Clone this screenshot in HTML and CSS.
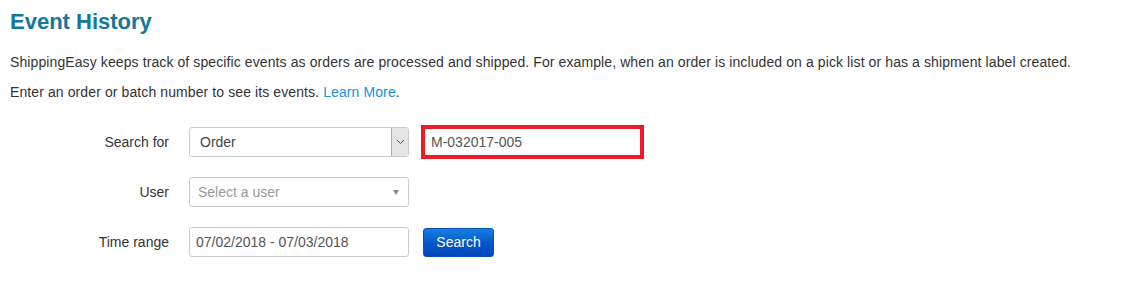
FILE: index.html
```html
<!DOCTYPE html>
<html>
<head>
<meta charset="utf-8">
<link rel="stylesheet" href="styles.css">
</head>
<body>
<div class="page">
  <h1 class="title">Event History</h1>
  <p class="intro">ShippingEasy keeps track of specific events as orders are processed and shipped. For example, when an order is included on a pick list or has a shipment label created.</p>
  <p class="intro second">Enter an order or batch number to see its events. <a class="link" href="#">Learn More</a>.</p>

  <div class="form">
    <div class="row">
      <div class="label">Search for</div>
      <div class="control select native">
        <span class="value">Order</span>
        <span class="dropbtn">
          <svg width="9" height="6" viewBox="0 0 9 6"><path d="M1 1 L4.5 4.5 L8 1" fill="none" stroke="#555" stroke-width="1"/></svg>
        </span>
      </div>
      <div class="control text highlight"><span class="value">M-032017-005</span></div>
    </div>
    <div class="row">
      <div class="label">User</div>
      <div class="control select chosen">
        <span class="placeholder">Select a user</span>
        <span class="caret"></span>
      </div>
    </div>
    <div class="row">
      <div class="label">Time range</div>
      <div class="control text"><span class="value">07/02/2018 - 07/03/2018</span></div>
      <button class="btn">Search</button>
    </div>
  </div>
</div>
</body>
</html>
```
FILE: styles.css
```css
html, body {
  margin: 0;
  padding: 0;
  background: #fff;
}
body {
  font-family: "Liberation Sans", Arial, sans-serif;
  font-size: 14px;
  color: #333;
}
.page {
  padding: 9px 10px 0 10px;
}
.title {
  margin: 0;
  font-size: 22px;
  line-height: 26px;
  font-weight: bold;
  color: #13789b;
}
.intro {
  margin: 17px 0 0 0;
  line-height: 20px;
  letter-spacing: 0.1px;
}
.intro.second {
  margin-top: 10px;
}
.link {
  color: #1a8fd9;
  text-decoration: none;
}
.form {
  margin-top: 25px;
  display: flex;
  flex-direction: column;
  gap: 20px;
}
.row {
  display: flex;
  align-items: center;
  height: 30px;
}
.label {
  width: 159px;
  text-align: right;
  margin-right: 20px;
  color: #333;
}
.control {
  box-sizing: border-box;
  width: 220px;
  height: 30px;
  border: 1px solid #ccc;
  border-radius: 3px;
  background: #fff;
  display: flex;
  align-items: center;
  position: relative;
}
.select.native .value {
  padding-left: 10px;
  color: #444;
  flex: 1;
}
.dropbtn {
  box-sizing: border-box;
  width: 17px;
  height: 28px;
  background: #e4e4e4;
  border-left: 1px solid #aaa;
  border-radius: 0 2px 2px 0;
  display: flex;
  align-items: center;
  justify-content: center;
}
.chosen .placeholder {
  padding-left: 8px;
  color: #999;
  flex: 1;
}
.caret {
  width: 0;
  height: 0;
  border-left: 3.5px solid transparent;
  border-right: 3.5px solid transparent;
  border-top: 5px solid #888;
  margin-right: 9px;
}
.text .value {
  padding-left: 6px;
  color: #555;
}
.highlight {
  margin: -2px 0 -2px 12px;
  width: 223px;
  height: 34px;
  border: 4px solid #ed1c24;
  border-radius: 0;
}
.highlight .value {
  padding-left: 6px;
}
.btn {
  margin-left: 14px;
  box-sizing: border-box;
  width: 71px;
  height: 29px;
  border: 1px solid #0a4fb5;
  border-radius: 3px;
  background: linear-gradient(to bottom, #167fe2 0%, #0356c9 55%, #0046bb 100%);
  color: #fff;
  font-family: "Liberation Sans", Arial, sans-serif;
  font-size: 14px;
  padding: 0;
}
```
